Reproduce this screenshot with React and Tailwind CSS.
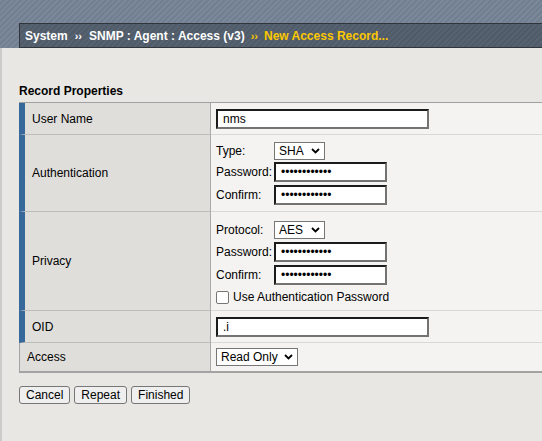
import { useState } from 'react'

function TextInput({ value, type = 'text', className = '' }) {
  const [val, setVal] = useState(value)
  return (
    <input
      type={type}
      value={val}
      onChange={(e) => setVal(e.target.value)}
      className={`h-[20px] border-2 border-t-[#1b1b1b] border-l-[#1b1b1b] border-r-[#737373] border-b-[#737373] bg-white px-[5px] text-[12px] text-black outline-none ${className}`}
    />
  )
}

function Select({ value, options, className = '' }) {
  return (
    <div className={`relative h-[18px] ${className}`}>
      <select
        defaultValue={value}
        className="h-[18px] w-full appearance-none border border-[#767676] bg-white pl-[4px] text-[12px] leading-[16px] text-black outline-none"
      >
        {options.map((o) => (
          <option key={o}>{o}</option>
        ))}
      </select>
      <svg
        className="pointer-events-none absolute right-[5px] top-[6px] h-[6px] w-[9px]"
        viewBox="0 0 9 6"
      >
        <path d="M1 1l3.5 3.5L8 1" stroke="#000" strokeWidth="1.8" fill="none" />
      </svg>
    </div>
  )
}

function Row({ label, required, height, last, children, valueClass = '' }) {
  return (
    <div className={`flex ${height}`}>
      <div
        className={`flex w-[192px] shrink-0 items-center border-r border-r-[#a9a9a9] bg-[#dfdedb] pl-[7px] ${
          required ? 'border-l-[6px] border-l-[#36689b]' : 'border-l border-l-[#a3a3a3]'
        } ${last ? '' : 'border-b border-b-[#bdbdbb]'}`}
      >
        {label}
      </div>
      <div className={`flex-1 bg-[#f4f3f1] pl-[5px] ${last ? '' : 'border-b border-b-[#d8d8d6]'} ${valueClass}`}>
        {children}
      </div>
    </div>
  )
}

function Line({ label, children, className = '' }) {
  return (
    <div className={`flex items-center ${className}`}>
      <span className="w-[58px] shrink-0">{label}</span>
      {children}
    </div>
  )
}

export default function App() {
  const [useAuthPw, setUseAuthPw] = useState(false)

  return (
    <div className="min-h-screen bg-[#e8e7e4] font-['Liberation_Sans',Arial,sans-serif] text-[12px] leading-[14px] text-black">
      <header className="h-[48px] bg-[repeating-linear-gradient(135deg,#7a889a_0px,#7a889a_2px,#717f91_2px,#717f91_4px)] pl-[19px] pt-[23px]">
        <div className="flex h-[25px] items-center border border-r-0 border-[#30353b] bg-[repeating-linear-gradient(135deg,#56626f_0px,#56626f_2px,#4f5b68_2px,#4f5b68_4px)] pl-[5px] font-bold text-white">
          <span>System</span>
          <span className="mx-[7px] text-[11px]">››</span>
          <span>SNMP : Agent : Access (v3)</span>
          <span className="mx-[6px] text-[11px] text-[#fcc800]">››</span>
          <span className="text-[#fcc800]">New Access Record...</span>
        </div>
      </header>

      <main className="min-h-[393px] border-l-2 border-l-[#cbcbc9] pl-[17px] pt-[36px]">
        <h2 className="mb-[4px] font-bold">Record Properties</h2>

        <div className="border-t border-t-[#a0a0a0] border-b-2 border-b-[#a3a3a3]">
          <Row label="User Name" required height="h-[32px]" valueClass="flex items-center">
            <TextInput value="nms" className="w-[213px]" />
          </Row>

          <Row label="Authentication" required height="h-[77px]" valueClass="pt-[7px]">
            <Line label="Type:">
              <Select value="SHA" options={['MD5', 'SHA']} className="w-[51px]" />
            </Line>
            <Line label="Password:" className="mt-[2px]">
              <TextInput type="password" value="abcdefghijkl" className="w-[113px]" />
            </Line>
            <Line label="Confirm:" className="mt-[3px]">
              <TextInput type="password" value="abcdefghijkl" className="w-[113px]" />
            </Line>
          </Row>

          <Row label="Privacy" required height="h-[99px]" valueClass="pt-[9px]">
            <Line label="Protocol:">
              <Select value="AES" options={['DES', 'AES']} className="w-[51px]" />
            </Line>
            <Line label="Password:" className="mt-[3px]">
              <TextInput type="password" value="abcdefghijkl" className="w-[113px]" />
            </Line>
            <Line label="Confirm:" className="mt-[3px]">
              <TextInput type="password" value="abcdefghijkl" className="w-[113px]" />
            </Line>
            <label className="mt-[4px] flex h-[16px] items-center">
              <input
                type="checkbox"
                checked={useAuthPw}
                onChange={(e) => setUseAuthPw(e.target.checked)}
                className="h-[13px] w-[13px] appearance-none rounded-[2px] border border-[#767676] bg-white"
              />
              <span className="ml-[4px]">Use Authentication Password</span>
            </label>
          </Row>

          <Row label="OID" required height="h-[32px]" valueClass="flex items-center">
            <TextInput value=".i" className="w-[213px]" />
          </Row>

          <Row label="Access" height="h-[28px]" last valueClass="flex items-center">
            <Select value="Read Only" options={['Read Only', 'Read/Write']} className="w-[82px]" />
          </Row>
        </div>

        <div className="mt-[13px] flex gap-[4px]">
          {['Cancel', 'Repeat', 'Finished'].map((b) => (
            <button
              key={b}
              type="button"
              className="h-[18px] rounded-[3px] border border-[#767676] bg-[#efefef] px-[6px] leading-[14px] hover:bg-[#e5e5e5]"
            >
              {b}
            </button>
          ))}
        </div>
      </main>
    </div>
  )
}
